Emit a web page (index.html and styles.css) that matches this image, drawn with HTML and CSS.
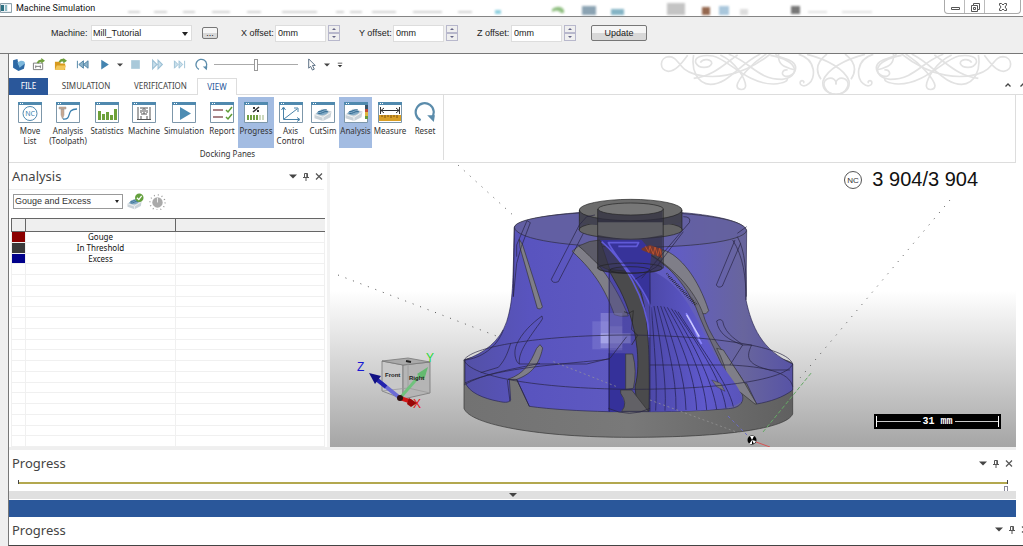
FILE: index.html
```html
<!DOCTYPE html>
<html lang="en">
<head>
    <meta charset="UTF-8">
    <meta name="viewport" content="width=device-width, initial-scale=1.0">
    <title>Machine Simulation</title>
    <link rel="stylesheet" href="styles.css">
</head>
<body>
    <svg class="defs" aria-hidden="true">
        <symbol id="win" viewBox="0 0 24 22">
            <path d="M.5 1.500h23v20h-23z" fill="#fff" stroke="#7d97aa"/>
            <path d="M0 1h24v3H0z" fill="#5089ae"/>
            <path d="M2 2h1v1H2zM4 2h1v1H4z" fill="#fff"/>
        </symbol>
        <symbol id="block" viewBox="0 0 20 18">
            <path d="M1 10l8-6 10 3-1 6-8 4-9-3z" fill="#c9d2d8"/>
            <path d="M1 10l9 3 8-5M10 13v4" fill="none" stroke="#f4f6f7"/>
            <path d="M3 9c3-5 9-5 13-2-2 4-8 5-13 2z" fill="#7fa9c4"/>
            <path d="M5 9c3 1 6-3 10-2M5 7c3 1 5-3 9-2" fill="none" stroke="#2f668e"/>
        </symbol>
        <symbol id="pin" viewBox="0 0 8 9">
            <path d="M2.500 5V1.500h3V5M1 5.500h6M4 6v3M4.800 1.500V5" fill="none" stroke="#555"/>
        </symbol>
        <symbol id="cross" viewBox="0 0 8 8">
            <path d="M1 1l6 6M7 1L1 7" fill="none" stroke="#555" stroke-width="1.200"/>
        </symbol>
        <symbol id="down" viewBox="0 0 8 8">
            <path d="M0 2h8L4 6z" fill="#444"/>
        </symbol>
        <symbol id="turn" viewBox="0 0 20 20">
            <path d="M6 17.500A8.200 8.200 0 1 1 16 15.500" fill="none" stroke="#5b8cab" stroke-width="2"/>
            <path d="M12 13l7 0-1 6z" fill="#5b8cab"/>
        </symbol>
    </svg>

    <header class="titlebar">
        <svg class="app-icon" viewBox="0 0 12 10"><path d="M.5.500h11v9H.5z" fill="#e8eef2" stroke="#8fa3ad"/><path d="M1 2h3v6H1z" fill="#2c6f80"/><path d="M5 2h2v6H5z" fill="#8dbac4"/><path d="M8 2h3v6H8z" fill="#fff"/></svg>
        <h1>Machine Simulation</h1>
        <svg class="glass" viewBox="0 0 900 16" preserveAspectRatio="xMinYMax slice">
            <g fill="#d2d2d2"><path d="M26 11h12v2H26zM52 11h13v2H52zM81 11h12v2H81zM110 11h18v2h-18zM145 11h14v2h-14zM180 11h35v2h-35zM234 11h8v2h-8zM248 11h12v2h-12zM270 11h24v2h-24zM311 11h29v2h-29zM356 11h14v2h-14z"/></g>
            <path d="M393 10h6v4h-6z" fill="#8fd0e0"/><path d="M450 9q8-5 12 1v3h-3q-3-4-9-1z" fill="#8fbf80"/>
            <path d="M480 6h14v9h-14z" fill="#8ba3b3"/><path d="M509 9h13v6h-13z" fill="#84b4c5"/>
            <path d="M565 3h18v12h-18z" fill="#c4c4c4"/><path d="M600 7h8v8h-8z" fill="#94674e"/><path d="M617 6h10v9h-10z" fill="#a9c7dc"/><path d="M638 9h8v6h-8z" fill="#ddd"/><path d="M689 6h9v8h-9z" fill="#777"/><path d="M706 11h19v2h-19zM740 11h30v2h-30z" fill="#e0e0e0"/>
        </svg>
        <div class="window-buttons">
            <button aria-label="Minimize"><svg viewBox="0 0 12 10"><path d="M2.500 5.500h8v2h-8z"/></svg></button>
            <button aria-label="Restore"><svg viewBox="0 0 12 10"><path d="M4.500 1.500h6v6h-2v2h-6v-6h2zM4.500 5.500h2v2h-2zM4.500 3.500h4v4"/></svg></button>
            <button class="wide" aria-label="Close"><svg viewBox="0 0 12 10"><path d="M2.500 1.500h2L6 3l1.500-1.500h2v1.500L8 5l1.500 2v1.500h-2L6 7 4.500 8.500h-2V7L4 5 2.500 3z"/></svg></button>
        </div>
    </header>

    <form class="config">
        <label class="machine-label" for="machine">Machine:</label>
        <span class="drop machine"><select id="machine"><option>Mill_Tutorial</option></select></span>
        <button type="button" class="push browse">...</button>
        <div class="offset">
            <label for="x-offset">X offset:</label>
            <input type="text" id="x-offset" value="0mm">
            <span class="spin"><button type="button" aria-label="X up"></button><button type="button" class="dec" aria-label="X down"></button></span>
        </div>
        <div class="offset">
            <label for="y-offset">Y offset:</label>
            <input type="text" id="y-offset" value="0mm">
            <span class="spin"><button type="button" aria-label="Y up"></button><button type="button" class="dec" aria-label="Y down"></button></span>
        </div>
        <div class="offset">
            <label for="z-offset">Z offset:</label>
            <input type="text" id="z-offset" value="0mm">
            <span class="spin"><button type="button" aria-label="Z up"></button><button type="button" class="dec" aria-label="Z down"></button></span>
        </div>
        <button type="button" class="push update">Update</button>
    </form>

    <main class="app">
        <div class="top">
            <svg class="ornament" viewBox="0 159 1060 123" aria-hidden="true">
                <g id="scroll" fill="none" stroke="#e2e2e2" stroke-width="5">
                    <path d="M82 163C62 190 45 211 24 211C-5 208-3 168 26 167C58 168 50 205 105 220C150 232 235 235 330 159"/>
                    <path d="M100 162C92 205 110 248 150 250C205 250 235 190 300 159"/>
                    <path d="M100 232C160 225 190 190 232 162M120 185C128 170 156 175 154 188C148 202 115 205 106 185C102 168 128 160 158 165C200 172 260 250 340 249C375 247 384 238 380 231"/>
                    <path d="M180 162C230 185 255 235 256 255C254 269 231 269 230 254C232 236 270 190 318 159M205 160C270 182 290 235 365 235C420 228 420 180 330 163"/>
                    <path d="M355 159C350 195 380 200 405 207M382 207C366 204 360 222 375 226C400 228 418 200 395 182C378 170 358 172 345 160"/>
                    <path d="M415 160C470 175 466 235 445 248C432 260 416 253 420 242C426 235 434 242 429 246M440 160C500 175 555 205 566 240C570 268 548 280 526 280C492 279 482 243 500 234C518 226 530 240 526 250"/>
                    <path d="M482 235C462 205 472 180 500 159"/>
                </g>
                <use href="#scroll" transform="translate(1054 0) scale(-1 1)"/>
            </svg>

            <div class="quick">
                <button aria-label="SolidCAM"><svg viewBox="0 0 12 12"><path d="M1 2l4-1 1 5 6-1-1 5-5 2-5-3z" fill="#2d69a5"/><path d="M5 4c4-3 7-1 7 1L7 9z" fill="#7db8dc"/></svg></button>
                <button aria-label="Save machine"><svg viewBox="0 0 14 14"><path d="M1.500 5.500h10v7h-10zM4 8v3M9 8v3M4 9h5" fill="none" stroke="#777"/><path d="M5 5q2-4 5-3V0l4 3-4 3V4Q8 4 7 6z" fill="#6e9f3c"/></svg></button>
                <button aria-label="Open"><svg viewBox="0 0 14 14"><path d="M1 4h5l1 2h5v7H1z" fill="#d79a1e"/><path d="M3 8h10l-2 5H1z" fill="#f2c75a"/><path d="M5 4q2-4 5-3V0l4 3-4 3V4Q8 3 7 5z" fill="#6e9f3c"/></svg></button>
                <button aria-label="Rewind"><svg viewBox="0 0 14 12"><path d="M1.500 2v8M8 2L3 6l5 4zM13 2L8 6l5 4z" fill="#8fb4ca" stroke="#4d82a5"/></svg></button>
                <button aria-label="Play"><svg viewBox="0 0 12 12"><path d="M3 1.500l7 4.500-7 4.500z" fill="#4484b0"/></svg></button>
                <button class="arrow" aria-label="Play options"><svg viewBox="0 0 8 8"><use href="#down"/></svg></button>
                <button aria-label="Stop"><svg viewBox="0 0 12 12"><path d="M2 2h8v8H2z" fill="#a9c9da"/></svg></button>
                <button aria-label="Forward"><svg viewBox="0 0 12 12"><path d="M1.500 2l4 4-4 4zM6.500 2l4 4-4 4z" fill="#c9dfeb" stroke="#9cc0d5"/></svg></button>
                <button aria-label="To end"><svg viewBox="0 0 14 12"><path d="M1.500 2l4 4-4 4zM6.500 2l4 4-4 4zM12.500 2v8" fill="#c9dfeb" stroke="#9cc0d5"/></svg></button>
                <button aria-label="Loop"><svg viewBox="0 0 20 20"><use href="#turn"/></svg></button>
                <input type="range" class="speed" aria-label="Speed" min="0" max="100" value="50">
                <button aria-label="Pointer"><svg viewBox="0 0 12 14"><path d="M3 1v10l2-2 2 4 2-1-2-4h3z" fill="#fff" stroke="#51677c"/></svg></button>
                <button class="arrow" aria-label="Pointer options"><svg viewBox="0 0 8 8"><use href="#down"/></svg></button>
                <button class="arrow customize" aria-label="Customize"><svg viewBox="0 0 8 8"><path d="M1 1h6v1H1zM1 4h6L4 7z" fill="#333"/></svg></button>
            </div>

            <nav class="tabs">
                <a class="file" href="#file">FILE</a>
                <a class="simulation" href="#simulation">SIMULATION</a>
                <a class="verification" href="#verification">VERIFICATION</a>
                <a class="view" href="#view">VIEW</a>
                <span class="rest"><svg viewBox="0 0 8 8"><path d="M1.500 5.500L4 3l2.500 2.500" fill="none" stroke="#444" stroke-width="1.300"/></svg><svg viewBox="0 0 8 8"><path d="M1.500 5.500L4 3l2.500 2.500" fill="none" stroke="#444" stroke-width="1.300"/></svg></span>
            </nav>
        </div>

        <section class="ribbon">
            <div class="group">
                <div class="tools">
                    <button><svg viewBox="0 0 24 22"><use href="#win"/><circle cx="12" cy="12.500" r="7" fill="#fff" stroke="#5089ae"/><text x="12" y="15" text-anchor="middle" class="nc-small">NC</text></svg>Move<br>List</button>
                    <button><svg viewBox="0 0 24 22"><use href="#win"/><path d="M3 6h7v2H3zM5 8h3v6l-1.500 4L5 14z" fill="#c9a890" stroke="#999" stroke-width=".5"/><path d="M7 18C17 19 9 8 21 8" fill="none" stroke="#397fae" stroke-width="1.300"/></svg>Analysis<br>(Toolpath)</button>
                    <button><svg viewBox="0 0 24 22"><use href="#win"/><path d="M3 10h3v9H3zM7 13h3v6H7zM11 11h3v8h-3zM15 14h3v5h-3zM19 8h3v11h-3z" fill="#6da13a"/></svg>Statistics</button>
                    <button><svg viewBox="0 0 24 22"><use href="#win"/><path d="M6 6v12M18 6v12M8 7h8M12 7v6M9 13h6M5 18.500h14M9 9v3M15 9v3M9 15v3M15 15v3" fill="none" stroke="#555"/><path d="M10 8h4v3h-4z" fill="#aaa"/></svg>Machine</button>
                    <button><svg viewBox="0 0 24 22"><use href="#win"/><path d="M8 6l11 6.500L8 19z" fill="#4d8cb3"/></svg>Simulation</button>
                    <button><svg viewBox="0 0 24 22"><use href="#win"/><path d="M3 9h10M3 16h10" stroke="#8d5b5f" stroke-width="1.500"/><path d="M16 9l2 2 4-5M16 16l2 2 4-5" fill="none" stroke="#5f9b34" stroke-width="1.500"/></svg>Report</button>
                    <button class="on"><svg viewBox="0 0 24 22"><use href="#win"/><path d="M9 11l6-5" stroke="#333" stroke-width="1.500"/><path d="M9 6h2v2H9zM13 9h2v2h-2z" fill="#333"/><path d="M3 14h2v5H3zM6 14h2v5H6zM9 14h2v5H9zM12 14h2v5h-2z" fill="#70a043"/><path d="M15 14h2v5h-2zM18 14h2v5h-2z" fill="#ccd8bd"/></svg>Progress</button>
                    <button><svg viewBox="0 0 24 22"><use href="#win"/><path d="M4.500 7v11.500H20M5 18L18 8" fill="none" stroke="#4982a8"/><path d="M2.500 9l2-3 2 3M18 16.500l3 2-3 2M15 7h4v4" fill="none" stroke="#4982a8"/></svg>Axis<br>Control</button>
                    <button><svg viewBox="0 0 24 22"><use href="#win"/><use href="#block" x="2" y="4" width="20" height="17"/></svg>CutSim</button>
                    <button class="on"><svg viewBox="0 0 24 22"><use href="#win"/><use href="#block" x="0" y="4" width="20" height="17"/><path d="M21 4h3v4h-3z" fill="#3a5368"/><path d="M21 8h3v3h-3z" fill="#c24b32"/><path d="M21 11h3v4h-3z" fill="#dfb43b"/><path d="M21 15h3v3h-3z" fill="#659b3b"/></svg>Analysis</button>
                    <button><svg viewBox="0 0 24 22"><use href="#win"/><path d="M1 14h22v6H1z" fill="#d99e25"/><path d="M4 14v2M7 14v3M10 14v2M13 14v3M16 14v2M19 14v3" stroke="#7d5310"/><path d="M3 9.500h18M6 7L3 9.500 6 12M18 7l3 2.500-3 2.500M2.500 6v7M21.500 6v7" fill="none" stroke="#333"/></svg>Measure</button>
                    <button><svg viewBox="0 0 20 20"><use href="#turn"/></svg>Reset</button>
                </div>
                <p>Docking Panes</p>
            </div>
        </section>

        <div class="work">
            <section class="analysis">
                <div class="pane-head">
                    <h2>Analysis</h2>
                    <button aria-label="Menu"><svg viewBox="0 0 8 8"><use href="#down"/></svg></button>
                    <button aria-label="Pin"><svg viewBox="0 0 8 9"><use href="#pin"/></svg></button>
                    <button aria-label="Close"><svg viewBox="0 0 8 8"><use href="#cross"/></svg></button>
                </div>
                <div class="filter">
                    <span class="drop mode"><select aria-label="Analysis type"><option>Gouge and Excess</option></select></span>
                    <button aria-label="Apply"><svg viewBox="0 0 20 18"><use href="#block" y="3" width="18" height="15"/><circle cx="14" cy="5" r="4.500" fill="#64a03d"/><path d="M11.500 5l2 2 3-4" fill="none" stroke="#fff" stroke-width="1.300"/></svg></button>
                    <button aria-label="Settings"><svg viewBox="0 0 20 18"><circle cx="10" cy="10" r="5.500" fill="#aaa"/><circle cx="10" cy="10" r="8" fill="none" stroke="#999" stroke-width="1.500" stroke-dasharray="1 3.200"/><path d="M10 10V5" stroke="#eee"/></svg></button>
                </div>
                <table>
                    <thead><tr><th class="swatch"></th><th class="name"></th><th></th></tr></thead>
                    <tbody>
                        <tr><td class="gouge"></td><td>Gouge</td><td></td></tr>
                        <tr><td class="threshold"></td><td>In Threshold</td><td></td></tr>
                        <tr><td class="excess"></td><td>Excess</td><td></td></tr>
                        <tr><td></td><td></td><td></td></tr>
                        <tr><td></td><td></td><td></td></tr>
                        <tr><td></td><td></td><td></td></tr>
                        <tr><td></td><td></td><td></td></tr>
                        <tr><td></td><td></td><td></td></tr>
                        <tr><td></td><td></td><td></td></tr>
                        <tr><td></td><td></td><td></td></tr>
                        <tr><td></td><td></td><td></td></tr>
                        <tr><td></td><td></td><td></td></tr>
                        <tr><td></td><td></td><td></td></tr>
                        <tr><td></td><td></td><td></td></tr>
                        <tr><td></td><td></td><td></td></tr>
                        <tr><td></td><td></td><td></td></tr>
                        <tr><td></td><td></td><td></td></tr>
                        <tr><td></td><td></td><td></td></tr>
                        <tr><td></td><td></td><td></td></tr>
                        <tr><td></td><td></td><td></td></tr>
                    </tbody>
                </table>
            </section>

            <section class="viewport">
                <svg class="scene" viewBox="330 163 686 284" role="img" aria-label="Impeller model">
                    <defs>
                        <linearGradient id="body" x1="0" x2="1" y1="0" y2="0">
                            <stop offset="0" stop-color="#5350a6"/><stop offset=".2" stop-color="#5954bf"/>
                            <stop offset=".65" stop-color="#625dc2"/><stop offset=".85" stop-color="#68659d"/><stop offset="1" stop-color="#5753a6"/>
                        </linearGradient>
                        <linearGradient id="gray" x1="0" x2="1" y1="0" y2="0">
                            <stop offset="0" stop-color="#727272"/><stop offset=".5" stop-color="#797979"/><stop offset="1" stop-color="#606060"/>
                        </linearGradient>
                        <linearGradient id="pocket" x1="0" x2="1" y1="0" y2="0">
                            <stop offset="0" stop-color="#4c48a8"/><stop offset=".6" stop-color="#5f59cc"/><stop offset="1" stop-color="#5954ba"/>
                        </linearGradient>
                    </defs>

                    <!-- axis guides -->
                    <g fill="none" stroke="#555" stroke-width="1" stroke-dasharray="1 7">
                        <path d="M458 165L515 217"/><path d="M338 275L512 342"/><path d="M950 200L800 378"/>
                    </g>

                    <!-- model -->
                    <g transform="translate(450 190) scale(.33333)" stroke-linejoin="round">
                        <path d="M42 510V655C60 705 270 742 540 742C830 742 1010 715 1028 672V522C1000 470 160 460 42 510z" fill="url(#gray)" stroke="#333" stroke-width="2"/>
                        <path d="M193 112C200 85 360 62 540 62C730 62 880 85 890 122L888 330C905 410 935 480 1028 522V600C1000 622 960 635 920 642L890 580L845 575C870 600 885 615 876 635C870 650 850 655 835 656C760 662 690 665 600 665L475 665C390 663 300 658 238 649L200 568H178L182 630C175 640 160 637 145 634C100 625 55 608 45 575V510C100 490 150 455 170 395C190 330 188 290 193 112z" fill="url(#body)" stroke="#29264f" stroke-width="2"/>

                        <!-- blade tips seen through the body -->
                        <g fill="#7f7e88" stroke="#333" stroke-width="2">
                            <path d="M208 148L218 165L277 350Q273 360 262 355L210 172z"/>
                            <path d="M270 464L278 474C265 535 235 555 200 568H174C225 550 240 520 260 475z"/>
                            <path d="M366 184L386 168C440 205 500 290 535 378Q510 382 493 374C470 310 440 250 366 184z"/>
                            <path d="M585 185L640 180C690 195 745 265 776 362L768 371H754C720 300 690 250 585 185z"/>
                            <path d="M585 185C680 235 745 315 765 390C790 460 850 520 882 576L836 578C815 510 770 440 735 345C700 280 660 225 585 185z" fill="#6d6b7c"/>
                            <path d="M800 475L820 480L882 576L920 642H915L835 578Q825 520 800 475z"/>
                        </g>

                        <!-- grooved pocket -->
                        <path d="M600 240C700 280 735 380 785 475C820 545 880 595 876 632C850 668 660 662 596 665z" fill="url(#pocket)"/>
                        <g fill="none" stroke="#29265f" stroke-width="2.500">
                            <path d="M604 350C612 460 623 570 617 662M612 348C630 450 651 570 645 662M622 348C650 450 680 560 678 660M632 348C665 440 706 560 708 660M642 350C685 440 735 550 740 660M652 352C705 440 762 555 770 660M664 356C720 440 785 565 800 658M674 360C735 450 815 565 828 655M684 365C750 470 835 580 850 650"/>
                        </g>
                        <path d="M708 370C730 400 740 440 755 462" fill="none" stroke="#8c87ff" stroke-width="5"/>
                        <path d="M710 375L748 440" stroke="#d0ceff" stroke-width="4"/>
                        <path d="M785 570L812 580L825 604L800 590z" fill="#77757d" stroke="#222"/>

                        <!-- highlight left of the bore -->
                        <g fill="#b6b5ef"><path d="M427 394h52v84h-52z" opacity=".2"/><path d="M452 369h65v105h-65z" opacity=".35"/><path d="M452 430h90v30h-90z" opacity=".65"/><path d="M479 409h38v72h-38z" opacity=".35"/></g>

                        <!-- bore -->
                        <path d="M475 235H600V665H475z" fill="#343082" opacity=".4"/>
                        <path d="M475 490H527V600L515 615L527 650L510 665H475z" fill="#35319a"/>
                        <path d="M475 238L545 245C585 310 602 400 597 664L560 640L555 590C575 520 560 400 510 300z" fill="#4a4a4c" stroke="#222" stroke-width="2"/>
                        <path d="M527 492H548Q562 545 550 595L527 598z" fill="#6b6a70" stroke="#333" stroke-width="2"/>
                        <path d="M512 600L545 600L595 664H515Q535 640 512 610z" fill="#626166" stroke="#333" stroke-width="2"/>
                        <path d="M522 365L536 370L550 362L545 418L563 436L545 465" fill="none" stroke="#222" stroke-width="2"/>

                        <!-- top face and hub -->
                        <path d="M193 112C200 50 880 45 890 122C870 190 205 190 193 112z" fill="#64619f" opacity=".85" stroke="#222" stroke-width="2"/>
                        <path d="M386 168Q420 150 450 150L480 240C440 230 420 195 386 168z" fill="#5c5b68" stroke="#333" stroke-width="2"/>
                        <path d="M388 60V115C390 155 694 155 696 115V60z" fill="#434255"/>
                        <ellipse cx="542" cy="119" rx="155" ry="27" fill="#646464" stroke="#222" stroke-width="2"/>
                        <path d="M388 60V92C400 115 680 115 696 92V60z" fill="#434350"/>
                        <ellipse cx="542" cy="60" rx="154" ry="32" fill="#6c6c6c" stroke="#222" stroke-width="2"/>
                        <path d="M388 60V120M696 60V120" stroke="#222" stroke-width="2"/>
                        <path d="M443 58V235C450 258 630 258 638 235V58z" fill="#2e2d3d" opacity=".72"/>
                        <path d="M443 97H638V135Q542 157 443 135z" fill="#5d5d62"/>
                        <ellipse cx="542" cy="57" rx="98" ry="18" fill="#777" stroke="#222" stroke-width="2"/>
                        <path d="M443 57V235M640 57V235" stroke="#222" stroke-width="2"/>
                        <path d="M450 150H575L605 185L600 230L602 345C550 270 500 190 450 150z" fill="#37339a"/>
                        <path d="M455 155C520 210 590 320 598 440L602 350C570 270 500 210 475 158H566L560 169H505" fill="none" stroke="#605ad8" stroke-width="5"/>
                        <path d="M575 175L600 165L636 178V204C620 198 600 190 575 180z" fill="#763830"/>
                        <path d="M586 169l10 18 4-18 10 24 5-22 8 26 6-22 6 25" fill="none" stroke="#b9522f" stroke-width="3"/>
                        <ellipse cx="540" cy="234" rx="97" ry="15" fill="none" stroke="#222" stroke-width="2"/>
                        <ellipse cx="540" cy="240" rx="60" ry="10" fill="none" stroke="#222" stroke-width="2"/>

                        <!-- hidden edges -->
                        <g fill="none" stroke="#26233f" stroke-width="2">
                            <path d="M42 510C70 465 300 435 540 435C800 438 1010 470 1028 522C1010 570 810 598 540 598C260 595 60 560 42 510z"/>
                            <path d="M42 585C100 550 200 535 270 520M42 580C150 530 350 523 480 507M600 525H840C940 530 1020 545 1028 590"/>
                            <path d="M193 112L190 320M478 240V665M600 240V665M475 655Q540 685 600 655"/>
                            <path d="M231 92L241 98L214 170L200 220L190 320M231 92L200 165V200"/>
                            <path d="M388 105L410 80L435 75M388 105L304 268Q307 282 325 275L400 130M700 125L620 230L555 268M700 80Q725 80 718 98L690 130L575 265"/>
                            <path d="M862 130L890 110M855 150L799 285Q805 296 817 288L872 160M848 150C880 200 888 260 888 330M862 140C885 180 890 250 889 320"/>
                            <path d="M276 378Q282 385 270 398C225 460 205 490 208 522C195 515 190 485 200 463C215 430 245 400 276 378M182 460C170 500 160 515 145 532L92 548M208 522H410L480 505L530 440"/>
                            <path d="M800 393Q812 384 818 394C825 435 870 455 878 465L840 525M800 393C805 430 835 450 878 465H905C885 505 895 525 960 540H1020"/>
                            <path d="M172 570L180 635M200 568L238 649M160 420C140 475 90 505 45 510"/>
                        </g>
                        <path d="M650 250L742 345M655 260L735 345" stroke="#222" stroke-width="5" stroke-dasharray="2 4"/>
                        <path d="M310 515L500 590M600 630L870 730" stroke="#999" stroke-width="2" stroke-dasharray="6 8"/>
                    </g>

                    <!-- origin marker -->
                    <path d="M728 416L752 440" stroke="#6b6bc5" stroke-dasharray="3 3"/>
                    <path d="M763 432L812 372" stroke="#65a965" stroke-dasharray="4 2"/>
                    <path d="M756 442L770 447" stroke="#d75454"/>
                    <circle cx="752" cy="440" r="4.500" fill="#000"/>
                    <path d="M752 440L750 436h4zM752 440v4h-3zM752 440l4 1-2 3z" fill="#fff"/>

                    <!-- view cube -->
                    <g stroke="#777" stroke-width=".8">
                        <path d="M382 361L403 365V399L382 391z" fill="#c8c8c8"/>
                        <path d="M403 365L430 362V393L403 399z" fill="#b5b5b5"/>
                        <path d="M382 361L408 358L430 362L403 365z" fill="#aaa"/>
                        <path d="M408 358V388L382 391M408 388L430 393" fill="none" stroke="#999"/>
                    </g>
                    <path d="M406 361l5 1" stroke="#222" stroke-width="2"/>
                    <path d="M400 398L375 378" stroke="#6b6bd4" stroke-width="4"/>
                    <path d="M386 387L375 378" stroke="#2424ad" stroke-width="4"/>
                    <path d="M369 373l12 3-6 8z" fill="#111184"/>
                    <path d="M400 398L421 374" stroke="#70c27d" stroke-width="3"/>
                    <path d="M428 367l-4 13-7-6z" fill="#64ba70"/>
                    <path d="M400 398L412 402" stroke="#d21616" stroke-width="4"/>
                    <path d="M409 398l8 5-6 4-4-3z" fill="#9a0808"/>
                    <circle cx="400" cy="398" r="3" fill="#301010"/>
                    <text class="face" x="385" y="377">Front</text>
                    <text class="face" x="409" y="380">Right</text>
                    <text class="axis z" x="357" y="371">Z</text>
                    <text class="axis y" x="426" y="362">Y</text>
                    <text class="axis x" x="413" y="408">X</text>
                </svg>
                <div class="counter">
                    <svg viewBox="0 0 20 20"><circle cx="10" cy="10" r="8.500" fill="#fff" stroke="#555"/><text x="10" y="13" text-anchor="middle" class="nc">NC</text></svg>
                    <span>3 904/3 904</span>
                </div>
                <div class="scale"><i></i><span>31 mm</span><i></i></div>
            </section>
        </div>

        <section class="progress">
            <div class="pane-head">
                <h2>Progress</h2>
                <button aria-label="Menu"><svg viewBox="0 0 8 8"><use href="#down"/></svg></button>
                <button aria-label="Pin"><svg viewBox="0 0 8 9"><use href="#pin"/></svg></button>
                <button aria-label="Close"><svg viewBox="0 0 8 8"><use href="#cross"/></svg></button>
            </div>
            <input type="range" class="timeline" aria-label="Progress" min="0" max="3904" value="3904">
        </section>
        <div class="splitter"><svg viewBox="0 0 8 8"><use href="#down"/></svg></div>
        <div class="status"></div>
        <section class="pane-head last">
            <h2>Progress</h2>
            <button aria-label="Menu"><svg viewBox="0 0 8 8"><use href="#down"/></svg></button>
            <button aria-label="Pin"><svg viewBox="0 0 8 9"><use href="#pin"/></svg></button>
            <button aria-label="Close"><svg viewBox="0 0 8 8"><use href="#cross"/></svg></button>
        </section>
    </main>
</body>
</html>
```

FILE: styles.css
```css
* {
    box-sizing: border-box;
}
body {
    margin: 0;
    min-height: 100vh;
    display: flex;
    flex-direction: column;
    overflow: hidden;
    background-color: #efefef;
    color: #333;
    font-family: "Noto Sans", "Open Sans", sans-serif;
    font-size: 8px;
}
h1, h2, p {
    margin: 0;
    font-weight: normal;
}
button, input, select {
    margin: 0;
    padding: 0;
    border: none;
    border-radius: 0;
    background: none;
    color: inherit;
    font: inherit;
}
button svg {
    display: block;
}
.defs {
    position: absolute;
    width: 0;
    height: 0;
}

/* title bar */
.titlebar {
    height: 17px;
    display: flex;
    align-items: center;
    background-color: #fff;
    border-bottom: 1px solid #858585;
}
.app-icon {
    width: 12px;
    height: 10px;
}
.titlebar h1 {
    width: 80px;
    margin-left: 4px;
    color: #111;
    font-family: Roboto, sans-serif;
    font-size: 9px;
    white-space: nowrap;
}
.glass {
    flex: 1;
    min-width: 0;
    height: 16px;
    margin-left: 6px;
    filter: blur(1px);
}
.window-buttons {
    display: flex;
    align-self: flex-start;
    height: 14px;
    margin-right: 2px;
    border: 1px solid #aaa;
    border-top: none;
    border-radius: 0 0 4px 4px;
}
.window-buttons button {
    width: 20px;
    border-right: 1px solid #bbb;
}
.window-buttons .wide {
    width: 35px;
    border-right: none;
}
.window-buttons svg {
    width: 12px;
    height: 10px;
    margin: 0 auto;
    fill: #fff;
    stroke: #555;
}

/* machine and offsets */
.config {
    height: 37px;
    display: flex;
    align-items: center;
    padding: 0 8px 4px 51px;
    border-bottom: 1px solid #777;
    color: #222;
    font-family: "Liberation Sans", Arial, sans-serif;
    font-size: 9px;
}
.machine-label {
    width: 40px;
}
.drop {
    position: relative;
    display: flex;
    background-color: #fff;
}
.drop select {
    width: 100%;
    appearance: none;
}
.drop::after {
    content: "";
    position: absolute;
    top: 6px;
    right: 3px;
    border: 3px solid transparent;
    border-top: 4px solid #222;
    border-bottom: none;
    pointer-events: none;
}
.machine {
    width: 101px;
    height: 16px;
    padding-left: 1px;
    border: 1px solid #ddd;
}
.push {
    border: 1px solid #777;
    border-radius: 2px;
    background: linear-gradient(#f5f5f5 50%, #d8d8d8 50%);
}
.browse {
    width: 16px;
    height: 12px;
    margin-left: 10px;
    line-height: 8px;
}
.offset {
    display: flex;
    align-items: center;
    margin-left: 19px;
}
.browse + .offset {
    margin-left: 23px;
}
.offset label {
    width: 34px;
    white-space: nowrap;
}
.offset input {
    width: 51px;
    height: 17px;
    padding-left: 2px;
    border: 1px solid #ddd;
    background-color: #fff;
}
.spin {
    display: grid;
    width: 12px;
    height: 16px;
    margin-left: 2px;
}
.spin button {
    display: grid;
    place-items: center;
    border: 1px solid #b8b8cc;
}
.spin button::before {
    content: "";
    border: 2px solid transparent;
    border-top: none;
    border-bottom: 2px solid #668;
}
.spin .dec::before {
    border-top: 2px solid #668;
    border-bottom: none;
}
.update {
    width: 56px;
    height: 16px;
    margin-left: 15px;
    line-height: 12px;
}

.app {
    flex: 1;
    display: flex;
    flex-direction: column;
    margin-left: 8px;
    border-left: 1px solid #777;
    border-bottom: 1px solid #444;
    background-color: #fff;
}

/* quick access and tabs */
.top {
    position: relative;
}
.ornament {
    position: absolute;
    top: 0;
    right: 9px;
    width: 354px;
    height: 41px;
}
.quick {
    height: 24px;
    display: flex;
    align-items: center;
    padding-bottom: 3px;
}
.quick button {
    width: 22px;
}
.quick button:first-child {
    width: 18px;
}
.quick .arrow {
    width: 9px;
}
.quick .customize {
    width: 18px;
}
.quick svg {
    width: 13px;
    height: 13px;
    margin: 0 auto;
}
.quick .arrow svg {
    width: 6px;
    height: 6px;
}
.speed {
    width: 84px;
    height: 12px;
    margin: 0 2px;
    appearance: none;
    background: linear-gradient(#aaa, #aaa) center / 100% 1px no-repeat;
}
.speed::-webkit-slider-thumb {
    appearance: none;
    width: 4px;
    height: 12px;
    border: 1px solid #999;
    background-color: #fff;
}
.tabs {
    position: relative;
    display: flex;
    height: 17px;
    line-height: 16px;
    text-align: center;
}
.tabs a {
    border-bottom: 1px solid #ddd;
    color: #444;
    text-decoration: none;
}
.tabs .file {
    width: 39px;
    border-color: #2a579a;
    background-color: #2a579a;
    color: #fff;
}
.tabs .simulation {
    width: 76px;
}
.tabs .verification {
    width: 73px;
}
.tabs .view {
    width: 40px;
    border: 1px solid #ddd;
    border-bottom: none;
    color: #2a579a;
}
.rest {
    flex: 1;
    display: flex;
    justify-content: flex-end;
    gap: 7px;
    margin-right: -4px;
    padding-top: 3px;
    border-bottom: 1px solid #ddd;
}
.rest svg {
    width: 8px;
    height: 8px;
}

/* ribbon */
.ribbon {
    height: 68px;
    margin-right: 7px;
    border-right: 1px solid #ddd;
    border-bottom: 1px solid #ddd;
}
.group {
    width: 435px;
    height: 65px;
    padding: 2px 0 0 3px;
    border-right: 1px solid #ddd;
}
.tools {
    display: grid;
    grid-template-columns: 36px 40px 38px 36px 44px 32px 36px 33px 32px 33px 36px 34px;
    height: 50px;
}
.tools button {
    display: flow-root;
    padding: 4px 0 12px;
    line-height: 10px;
    white-space: nowrap;
}
.tools button:has(br) {
    padding-bottom: 2px;
}
.tools svg {
    width: 24px;
    height: 22px;
    margin: 0 auto 3px;
}
.tools .on {
    background-color: #a3bce2;
}
.nc-small {
    fill: #397fae;
    font-size: 7px;
}
.group p {
    text-align: center;
    line-height: 14px;
}

/* docking panes */
.pane-head {
    display: flex;
    align-items: center;
    gap: 5px;
    height: 26px;
    padding: 0 1px 0 3px;
}
.pane-head h2 {
    flex: 1;
    color: #444;
    font-size: 13px;
}
.pane-head button {
    width: 8px;
}
.pane-head svg {
    width: 8px;
    height: 9px;
}
.work {
    display: flex;
    height: 287px;
    margin-right: 7px;
    border-bottom: 3px solid #efefef;
}
.analysis {
    flex: none;
    display: flex;
    flex-direction: column;
    width: 321px;
    padding-right: 3px;
    border-right: 3px solid #f3f3f3;
}
.filter {
    display: flex;
    align-items: center;
    gap: 3px;
    height: 29px;
    padding: 0 0 6px 4px;
    border-top: 1px solid #eee;
}
.filter svg {
    width: 19px;
    height: 17px;
}
.mode {
    width: 110px;
    height: 15px;
    border: 1px solid #999;
    font-family: "Liberation Sans", Arial, sans-serif;
    font-size: 9px;
}
.mode select {
    padding-left: 1px;
}
.mode::after {
    top: 5px;
    border-width: 2px;
    border-top-width: 3px;
}
.analysis table {
    flex: 1;
    width: 314px;
    margin-left: 2px;
    table-layout: fixed;
    border-collapse: collapse;
    border-left: 1px solid #666;
    color: #111;
    font-size: 8px;
    line-height: 9px;
    text-align: center;
}
th {
    height: 13px;
    padding: 0;
    border: 1px solid #666;
    border-right: none;
    background-color: #efefef;
}
td {
    height: 10px;
    padding: 0;
    border: 1px solid #f0f0f0;
}
.swatch {
    width: 14px;
}
.name {
    width: 150px;
}
.gouge {
    background-color: #8b0000;
}
.threshold {
    background-color: #3a3a3a;
}
.excess {
    background-color: #00008b;
}

/* 3D view */
.viewport {
    position: relative;
    flex: 1;
    min-width: 0;
    background: linear-gradient(#fff 45%, #a5a5a5);
}
.scene {
    display: block;
    width: 100%;
    height: 100%;
}
.face {
    fill: #222;
    font: bold 6px "Liberation Sans", sans-serif;
}
.axis {
    font: 12px "Liberation Sans", sans-serif;
}
.z {
    fill: #1717d4;
}
.y {
    fill: #28d838;
}
.x {
    fill: #e01616;
}
.counter {
    position: absolute;
    top: 5px;
    right: 38px;
    display: flex;
    align-items: center;
    gap: 9px;
    color: #111;
    font-family: "Liberation Sans", Arial, sans-serif;
    font-size: 20px;
}
.counter svg {
    width: 20px;
    height: 20px;
}
.nc {
    fill: #333;
    font-size: 8px;
}
.scale {
    position: absolute;
    right: 15px;
    bottom: 18px;
    display: flex;
    align-items: center;
    gap: 2px;
    width: 127px;
    height: 15px;
    padding: 0 2px;
    background-color: #000;
    color: #fff;
    font: bold 10px "Liberation Mono", monospace;
}
.scale i {
    flex: 1;
    height: 11px;
    border-left: 1px solid #fff;
    background: linear-gradient(#ccc, #ccc) center / 100% 1px no-repeat;
}
.scale i:last-child {
    border-left: none;
    border-right: 1px solid #fff;
}

/* progress */
.progress {
    height: 41px;
    margin-right: 7px;
    padding-right: 2px;
    overflow: hidden;
}
.timeline {
    display: block;
    width: calc(100% - 15px);
    height: 16px;
    margin-left: 9px;
    appearance: none;
    background:
        linear-gradient(#444, #444) 0 4px / 1px 4px no-repeat,
        linear-gradient(#444, #444) 100% 4px / 1px 4px no-repeat,
        linear-gradient(#b3a84f, #b3a84f) 0 6px / 100% 2px no-repeat;
}
.timeline::-webkit-slider-thumb {
    appearance: none;
    width: 4px;
    height: 6px;
    margin-top: 10px;
    border: 1px solid #889;
    background-color: #fff;
}
.splitter {
    display: flex;
    justify-content: center;
    height: 9px;
    margin-right: 7px;
    background-color: #e0e0e0;
    border-bottom: 1px solid #fff;
}
.splitter svg {
    width: 8px;
    height: 8px;
}
.status {
    height: 17px;
    margin-right: 7px;
    background-color: #2a579a;
}
.last {
    height: 25px;
    padding-right: 0;
    margin-right: -6px;
}
```
